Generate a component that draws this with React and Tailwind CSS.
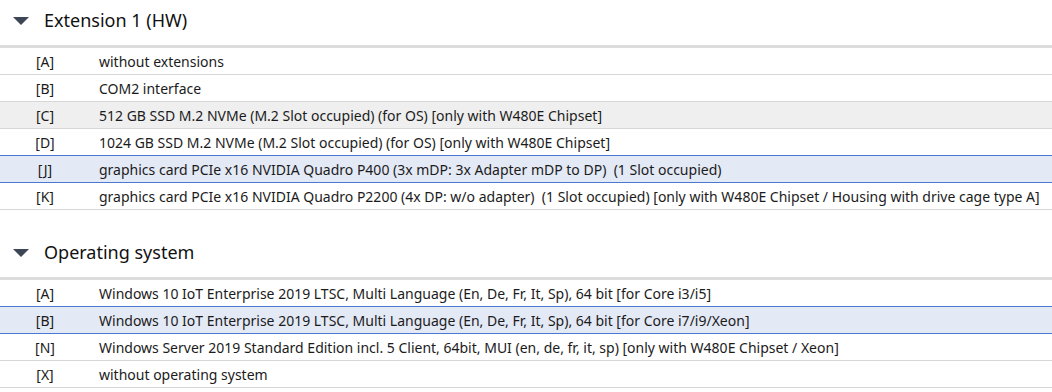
const sections = [
  {
    title: "Extension 1 (HW)",
    rows: [
      { code: "[A]", text: "without extensions" },
      { code: "[B]", text: "COM2 interface" },
      { code: "[C]", text: "512 GB SSD M.2 NVMe (M.2 Slot occupied) (for OS) [only with W480E Chipset]", state: "hover" },
      { code: "[D]", text: "1024 GB SSD M.2 NVMe (M.2 Slot occupied) (for OS) [only with W480E Chipset]" },
      { code: "[J]", text: "graphics card PCIe x16 NVIDIA Quadro P400 (3x mDP: 3x Adapter mDP to DP)  (1 Slot occupied)", state: "selected" },
      { code: "[K]", text: "graphics card PCIe x16 NVIDIA Quadro P2200 (4x DP: w/o adapter)  (1 Slot occupied) [only with W480E Chipset / Housing with drive cage type A]" },
    ],
  },
  {
    title: "Operating system",
    rows: [
      { code: "[A]", text: "Windows 10 IoT Enterprise 2019 LTSC, Multi Language (En, De, Fr, It, Sp), 64 bit [for Core i3/i5]" },
      { code: "[B]", text: "Windows 10 IoT Enterprise 2019 LTSC, Multi Language (En, De, Fr, It, Sp), 64 bit [for Core i7/i9/Xeon]", state: "selected" },
      { code: "[N]", text: "Windows Server 2019 Standard Edition incl. 5 Client, 64bit, MUI (en, de, fr, it, sp) [only with W480E Chipset / Xeon]" },
      { code: "[X]", text: "without operating system" },
    ],
  },
];

function Row({ code, text, state }) {
  let cls = "h-[27px] border-b border-[#d7d7d7] bg-white";
  if (state === "hover") cls = "h-[27px] border-b border-[#d7d7d7] bg-[#efefef]";
  if (state === "selected")
    cls = "relative h-[28px] -mt-px border-y border-[#4b79d1] bg-[#e4e9f6]";
  return (
    <div className={`flex items-center text-[14px] text-[#1b1b1b] whitespace-pre ${cls}`}>
      <span className="w-[90px] text-center">{code}</span>
      <span className="pl-[9px]">{text}</span>
    </div>
  );
}

function Section({ title, rows, first }) {
  return (
    <div className={first ? "" : "mt-[22px]"}>
      <div className="h-[45px] flex items-center pl-[13px] pb-[4px]">
        <svg width="16" height="8" viewBox="0 0 16 8">
          <path d="M0 0 H16 L8 8 Z" fill="#3d4654" />
        </svg>
        <span className="ml-[15px] text-[18px] text-[#111]">{title}</span>
      </div>
      <div className="border-t-[3px] border-[#dcdcdc]">
        {rows.map((r, i) => (
          <Row key={i} {...r} />
        ))}
      </div>
    </div>
  );
}

export default function App() {
  return (
    <div className="w-[1052px] h-[392px] overflow-hidden bg-white font-['Noto_Sans',sans-serif]">
      {sections.map((s, i) => (
        <Section key={i} {...s} first={i === 0} />
      ))}
    </div>
  );
}
